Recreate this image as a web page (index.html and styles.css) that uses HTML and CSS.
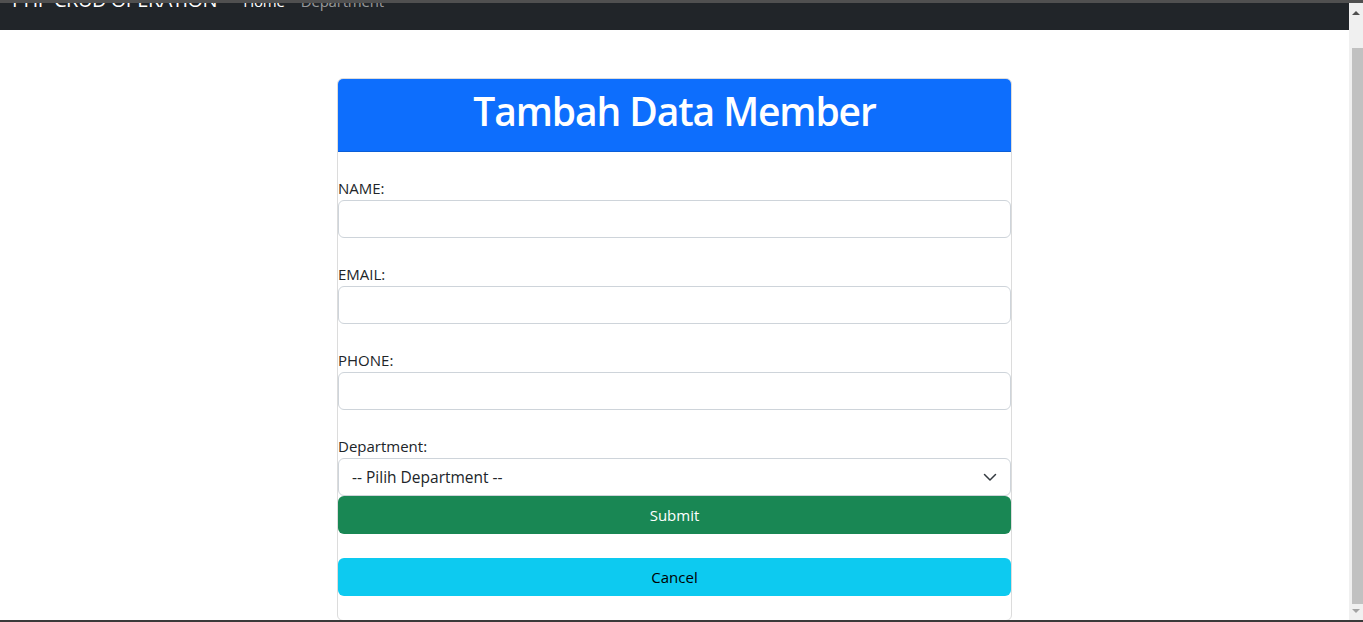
FILE: index.html
```html
<!DOCTYPE html>
<html lang="id">
<head>
<meta charset="utf-8">
<title>Tambah Data Member</title>
<link rel="stylesheet" href="styles.css">
</head>
<body>
<div class="frame">
  <div class="topline"></div>
  <div class="window">
    <div class="page">
      <nav class="navbar">
        <div class="navbar-inner">
          <a class="brand" href="#">PHP CRUD OPERATION</a>
          <ul class="nav">
            <li><a class="nav-link active" href="#">Home</a></li>
            <li><a class="nav-link" href="#">Department</a></li>
          </ul>
        </div>
      </nav>
      <main class="card">
        <div class="card-header">
          <h1 class="title">Tambah Data Member</h1>
        </div>
        <form class="card-body">
          <div class="group">
            <label class="label" for="name">NAME:</label>
            <input class="control" id="name" type="text">
          </div>
          <div class="group">
            <label class="label" for="email">EMAIL:</label>
            <input class="control" id="email" type="text">
          </div>
          <div class="group">
            <label class="label" for="phone">PHONE:</label>
            <input class="control" id="phone" type="text">
          </div>
          <div class="group">
            <label class="label" for="dept">Department:</label>
            <div class="select">
              <span class="select-text">-- Pilih Department --</span>
              <svg class="chevron" width="16" height="12" viewBox="0 0 16 12"><path d="M2.5 3.5l5.5 5.5 5.5-5.5" fill="none" stroke="#343a40" stroke-width="1.5" stroke-linecap="round" stroke-linejoin="round"/></svg>
            </div>
          </div>
          <button class="btn btn-success" type="button">Submit</button>
          <button class="btn btn-info" type="button">Cancel</button>
        </form>
      </main>
    </div>
    <div class="scrollbar">
      <span class="arrow arrow-up"></span>
      <div class="thumb"></div>
      <span class="arrow arrow-down"></span>
    </div>
  </div>
  <div class="bottomline"></div>
</div>
</body>
</html>
```
FILE: styles.css
```css
* { box-sizing: border-box; }
html, body { margin: 0; padding: 0; }
body {
  font-family: "Open Sans", "Noto Sans", sans-serif;
  font-size: 16px;
  line-height: 24px;
  color: #212529;
  background: #fff;
}
.frame {
  width: 1363px;
  height: 622px;
  display: flex;
  flex-direction: column;
  overflow: hidden;
}
.topline { height: 3px; background: #505050; flex: none; }
.bottomline { height: 2px; background: #3a3a3a; flex: none; }
.window { flex: 1; display: flex; min-height: 0; }
.page { flex: 1; overflow: hidden; min-width: 0; }

.navbar {
  height: 27px;
  background: #212529;
  overflow: hidden;
}
.navbar-inner {
  display: flex;
  align-items: baseline;
  padding-left: 12px;
  margin-top: -18px;
}
.brand {
  font-size: 20px;
  line-height: 30px;
  color: #fff;
  text-decoration: none;
  margin-right: 18px;
  letter-spacing: -0.5px;
}
.nav { display: flex; list-style: none; margin: 0; padding: 0; }
.nav-link {
  display: block;
  padding: 0 8px;
  color: rgba(255,255,255,.55);
  text-decoration: none;
  font-size: 15px;
  letter-spacing: -0.2px;
}
.nav-link.active { color: #fff; }

.card {
  width: 675px;
  margin: 48px auto 0;
  border: 1px solid #dcdcdc;
  border-radius: 6px;
  background: #fff;
}
.card-header {
  background: #0d6efd;
  color: #fff;
  padding: 8px 16px;
  text-align: center;
  border-radius: 5px 5px 0 0;
  border-bottom: 1px solid #0b5ed7;
}
.title {
  margin: 0 0 8px;
  font-size: 39px;
  line-height: 48px;
  font-weight: 600;
  letter-spacing: -1.1px;
}
.card-body { padding: 0 0 24px; display: flex; flex-direction: column; }
.group { margin-top: 24px; }
.label { display: block; line-height: 24px; font-size: 15px; }
.control {
  display: block;
  width: 100%;
  height: 38px;
  padding: 6px 12px;
  border: 1px solid #ced4da;
  border-radius: 6px;
  font: inherit;
  background: #fff;
}
.select {
  display: flex;
  align-items: center;
  justify-content: space-between;
  height: 38px;
  padding: 6px 12px 6px 13px;
  border: 1px solid #ced4da;
  border-radius: 6px;
  background: #fff;
  font-size: 15.5px;
}
.chevron { display: block; }
.btn {
  display: block;
  width: 100%;
  height: 38px;
  border: 0;
  border-radius: 6px;
  font-family: inherit;
  font-size: 15px;
  line-height: 24px;
  text-align: center;
  padding: 6px 12px;
}
.btn-success { background: #198754; color: #fff; }
.btn-info { background: #0dcaf0; color: #000; margin-top: 24px; }

.scrollbar {
  width: 14px;
  flex: none;
  background: #f0f0f0;
  display: flex;
  flex-direction: column;
  align-items: center;
}
.arrow { width: 0; height: 0; border-left: 4px solid transparent; border-right: 4px solid transparent; flex: none; }
.arrow-up { border-bottom: 4px solid #505050; margin-top: 8px; }
.arrow-down { border-top: 4px solid #a3a3a3; margin-top: 5px; }
.thumb {
  width: 11px;
  height: 556px;
  margin-top: 33px;
  background: #c1c1c1;
  margin-left: 2px;
}
```
